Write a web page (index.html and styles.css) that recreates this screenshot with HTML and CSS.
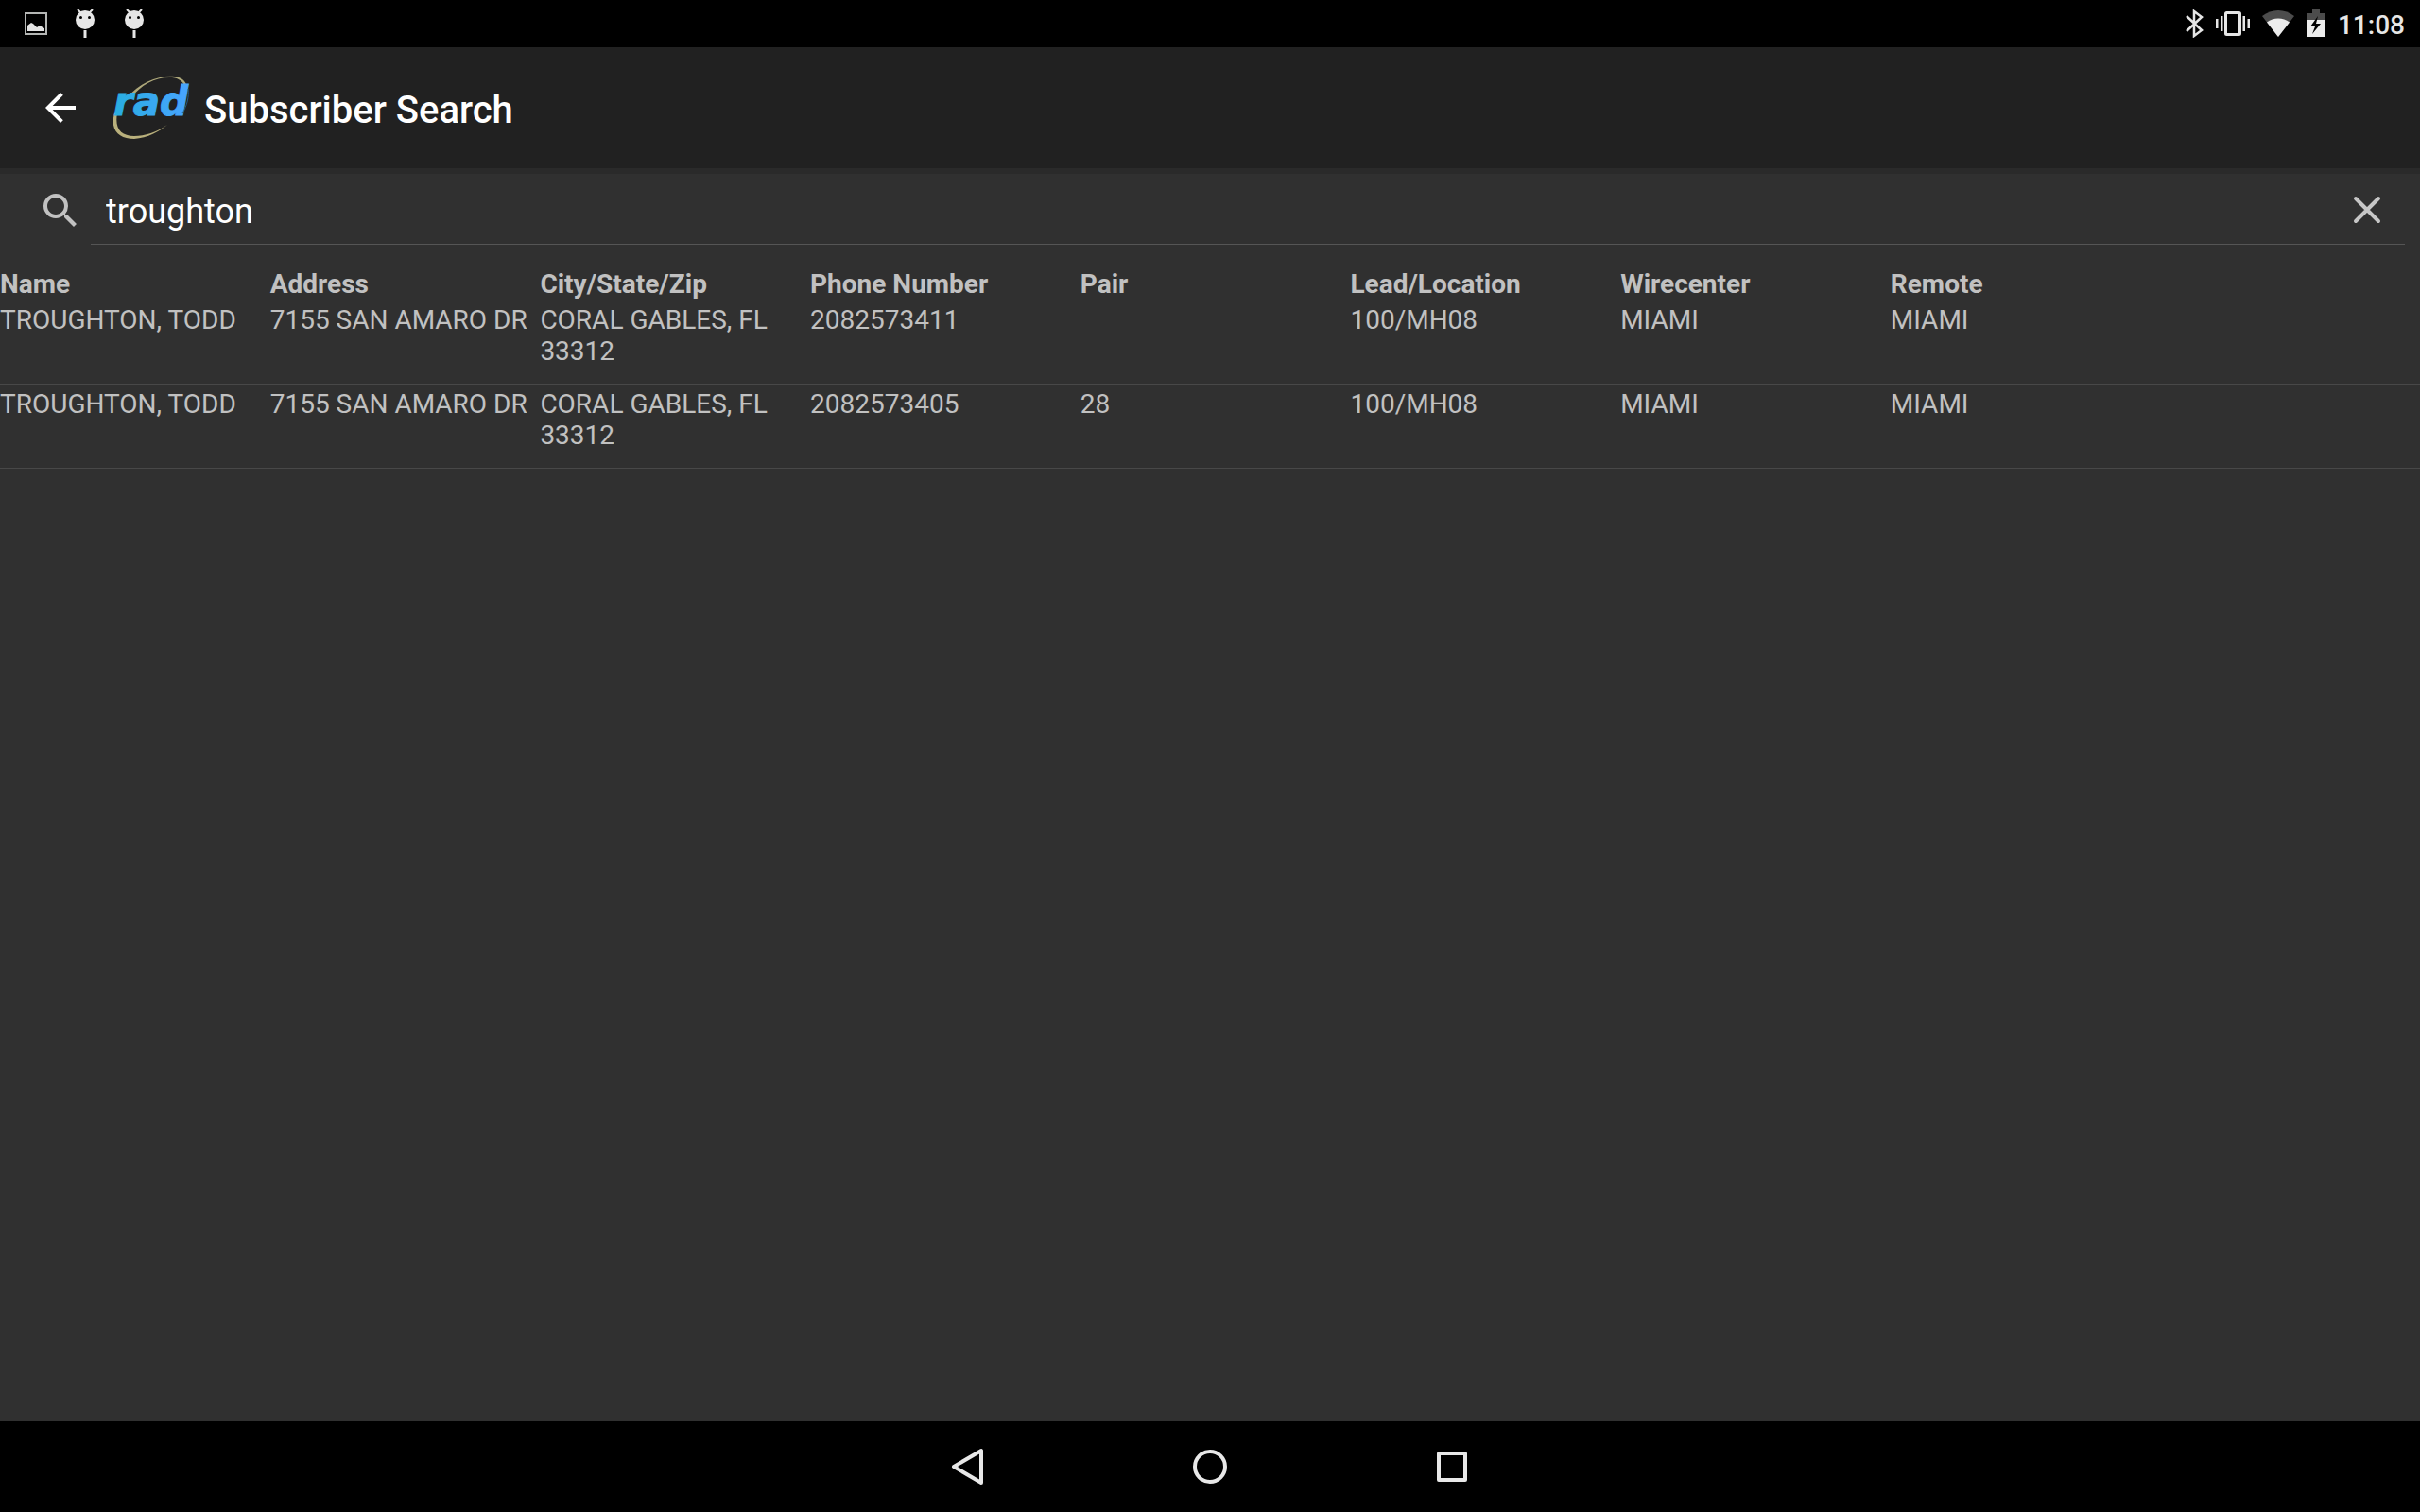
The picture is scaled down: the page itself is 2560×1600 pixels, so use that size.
FILE: index.html
```
<!DOCTYPE html>
<html lang="en">
<head>
<meta charset="utf-8">
<title>Subscriber Search</title>
<link rel="stylesheet" href="styles.css">
</head>
<body>
<div class="status-bar">
  <div class="status-left">
    <svg width="24" height="24" viewBox="0 0 24 24" aria-hidden="true"><rect x="1" y="1" width="22" height="22" fill="none" stroke="#b4b6b4" stroke-width="2"/><path d="M3 20v-6l4-3 2 1 4 4 3-2 5 3v3z" fill="#e4e4e4"/></svg>
    <svg class="bug" width="20" height="32" viewBox="0 0 20 32" aria-hidden="true"><path d="M2 1l4 4M18 1l-4 4" stroke="#e6e6e6" stroke-width="2"/><circle cx="10" cy="12" r="10" fill="#e6e6e6"/><rect x="8.500" y="23" width="3" height="8" fill="#e6e6e6"/><circle cx="5.500" cy="9.500" r="1.500"/><circle cx="14.500" cy="9.500" r="1.500"/></svg>
    <svg class="bug" width="20" height="32" viewBox="0 0 20 32" aria-hidden="true"><path d="M2 1l4 4M18 1l-4 4" stroke="#e6e6e6" stroke-width="2"/><circle cx="10" cy="12" r="10" fill="#e6e6e6"/><rect x="8.500" y="23" width="3" height="8" fill="#e6e6e6"/><circle cx="5.500" cy="9.500" r="1.500"/><circle cx="14.500" cy="9.500" r="1.500"/></svg>
  </div>
  <div class="status-right">
    <svg width="20" height="30" viewBox="0 0 20 30" aria-hidden="true"><path d="M2 7l16 15-8 6V2l8 6L2 23" fill="none" stroke="#e6e6e6" stroke-width="2.500"/></svg>
    <svg width="36" height="30" viewBox="0 0 36 30" fill="#e6e6e6" aria-hidden="true"><rect x="10.500" y="3.500" width="15" height="23" rx="1" fill="none" stroke="#e6e6e6" stroke-width="3"/><path d="M5 7h2.500v16H5zM28.500 7H31v16h-2.500zM0 10h2.500v10H0zM33.500 10H36v10h-2.500z"/></svg>
    <svg width="34" height="30" viewBox="0 0 34 30" aria-hidden="true"><path d="M0 7C10-1 24-1 34 7L17 29z" fill="#4c4c4c"/><path d="M5 13.500C12 8 22 8 29 13.500L17 29z" fill="#ececec"/></svg>
    <svg width="20" height="30" viewBox="0 0 20 30" aria-hidden="true"><path d="M0 12V4h6V0h8v4h5v8z" fill="#4c4c4c"/><path d="M0 11h19v18H0z" fill="#ececec"/><path d="M12 7L4 18h5l-3 8 9-11h-5z"/></svg>
    <span class="clock">11:08</span>
  </div>
</div>

<header class="app-bar">
  <button class="icon-button" type="button" aria-label="Back">
    <svg width="48" height="48" viewBox="0 0 24 24" fill="#fff" aria-hidden="true"><path d="M20 11H7.830l5.590-5.590L12 4l-8 8 8 8 1.410-1.410L7.830 13H20v-2z"/></svg>
  </button>
  <svg class="logo" width="84" height="72" viewBox="0 0 84 72" role="img" aria-label="rad">
    <defs><linearGradient id="blue"><stop offset="0" stop-color="#28aee0"/><stop offset="1" stop-color="#48a4ff"/></linearGradient></defs>
    <path d="M14 26C28 8 50 1 65 3c9 1 13 7 13 14l-2-1C75 9 70 5 62 4 45 3 30 11 18 26z" fill="#aea87a"/>
    <path d="M1 42C-4 60 6 69 22 69c14-1 27-8 35-15C46 62 33 66 22 66 8 66 1 58 4 42z" fill="#b9b07c"/>
    <text class="logo-text" x="0" y="44" fill="url(#blue)" stroke="url(#blue)">rad</text>
    <path d="M79 16c1 9-1 17-6 26" fill="none" stroke="#215a86" stroke-width="1"/>
  </svg>
  <h1>Subscriber Search</h1>
</header>

<main>
  <form class="search" role="search">
    <label for="query" aria-label="Search">
      <svg width="48" height="48" viewBox="0 0 24 24" fill="#c1c1c1" aria-hidden="true"><path d="M15.500 14h-.79l-.28-.27A6.471 6.471 0 0 0 16 9.500 6.500 6.500 0 1 0 9.500 16c1.610 0 3.090-.59 4.230-1.570l.27.28v.79l5 4.990L20.490 19l-4.990-5zm-6 0C7.010 14 5 11.990 5 9.500S7.010 5 9.500 5 14 7.010 14 9.500 11.990 14 9.500 14z"/></svg>
    </label>
    <div class="field">
      <input id="query" type="text" value="troughton">
      <button class="icon-button" type="reset" aria-label="Clear">
        <svg width="48" height="48" viewBox="0 0 48 48" aria-hidden="true"><path d="M12 12l24 24M36 12L12 36" stroke="#c6c6c6" stroke-width="4" stroke-linecap="round"/></svg>
      </button>
    </div>
  </form>

  <table>
    <thead>
      <tr><th>Name</th><th>Address</th><th>City/State/Zip</th><th>Phone Number</th><th>Pair</th><th>Lead/Location</th><th>Wirecenter</th><th class="last">Remote</th></tr>
    </thead>
    <tbody>
      <tr><td>TROUGHTON, TODD</td><td>7155 SAN AMARO DR</td><td>CORAL GABLES, FL 33312</td><td>2082573411</td><td></td><td>100/MH08</td><td>MIAMI</td><td>MIAMI</td></tr>
      <tr><td>TROUGHTON, TODD</td><td>7155 SAN AMARO DR</td><td>CORAL GABLES, FL 33312</td><td>2082573405</td><td>28</td><td>100/MH08</td><td>MIAMI</td><td>MIAMI</td></tr>
    </tbody>
  </table>
</main>

<nav class="nav-bar" aria-label="System">
  <button type="button" aria-label="Back"><svg width="48" height="48" viewBox="0 0 48 48" aria-hidden="true"><path d="M38 7v34L9 24z"/></svg></button>
  <button type="button" aria-label="Home"><svg width="48" height="48" viewBox="0 0 48 48" aria-hidden="true"><circle cx="24" cy="24" r="16"/></svg></button>
  <button type="button" aria-label="Overview"><svg width="48" height="48" viewBox="0 0 48 48" aria-hidden="true"><rect x="10" y="10" width="28" height="28"/></svg></button>
</nav>
</body>
</html>
```
FILE: styles.css
```
* {
  box-sizing: border-box;
}

body {
  margin: 0;
  min-height: 100vh;
  display: flex;
  flex-direction: column;
  background: #303030;
  color: #c1c1c1;
  font-family: Roboto, "Noto Sans", sans-serif;
  font-size: 28px;
  line-height: 33px;
}

svg {
  display: block;
  flex: none;
}

button {
  padding: 0;
  border: 0;
  background: none;
}

.status-bar {
  height: 50px;
  padding: 0 16px 0 26px;
  display: flex;
  align-items: center;
  justify-content: space-between;
  background: #000;
}

.status-left {
  display: flex;
  align-items: center;
  gap: 32px;
}

.status-left svg:first-child {
  margin-right: -2px;
}

.status-right {
  display: flex;
  align-items: center;
  gap: 13px;
}

.clock {
  padding-top: 2px;
  color: #e6e6e6;
  font-weight: 500;
}

.app-bar {
  height: 134px;
  padding-left: 40px;
  display: flex;
  align-items: center;
  background: #212121;
  border-bottom: 6px solid #2a2a2a;
}

.logo {
  margin: 0 12px 0 32px;
}

.logo-text {
  font: italic bold 42px "DejaVu Sans", sans-serif;
  stroke-width: 1px;
}

h1 {
  margin: 0;
  padding-top: 5px;
  color: #fff;
  font-size: 40px;
  line-height: 48px;
  font-weight: 500;
}

main {
  flex: 1;
}

.search {
  display: flex;
  align-items: flex-end;
  gap: 8px;
  padding: 0 16px 0 40px;
}

.search label {
  padding-bottom: 12px;
}

.field {
  flex: 1;
  display: flex;
  align-items: center;
  height: 75px;
  padding: 2px 16px 0;
  border-bottom: 1px solid #555;
}

.field input {
  flex: 1;
  min-width: 0;
  padding: 4px 0 0;
  border: 0;
  outline: 0;
  background: none;
  color: #fff;
  font: 36px/44px Roboto, "Noto Sans", sans-serif;
}

table {
  width: 100%;
  margin-top: 25px;
  table-layout: fixed;
  border-spacing: 0;
}

th,
td {
  padding: 0;
  text-align: left;
  vertical-align: top;
}

th {
  width: 11.16%;
  height: 34px;
  font-weight: 700;
}

th.last {
  width: auto;
}

td {
  padding: 4px 12px 18px 0;
  border-bottom: 1px solid #484848;
}

td:nth-child(2) {
  padding-right: 0;
}

.nav-bar {
  height: 96px;
  display: flex;
  justify-content: center;
  background: #000;
}

.nav-bar button {
  width: 256px;
  display: flex;
  align-items: center;
  justify-content: center;
}

.nav-bar svg {
  fill: none;
  stroke: #e8e8e8;
  stroke-width: 4;
  stroke-linejoin: round;
}
```
